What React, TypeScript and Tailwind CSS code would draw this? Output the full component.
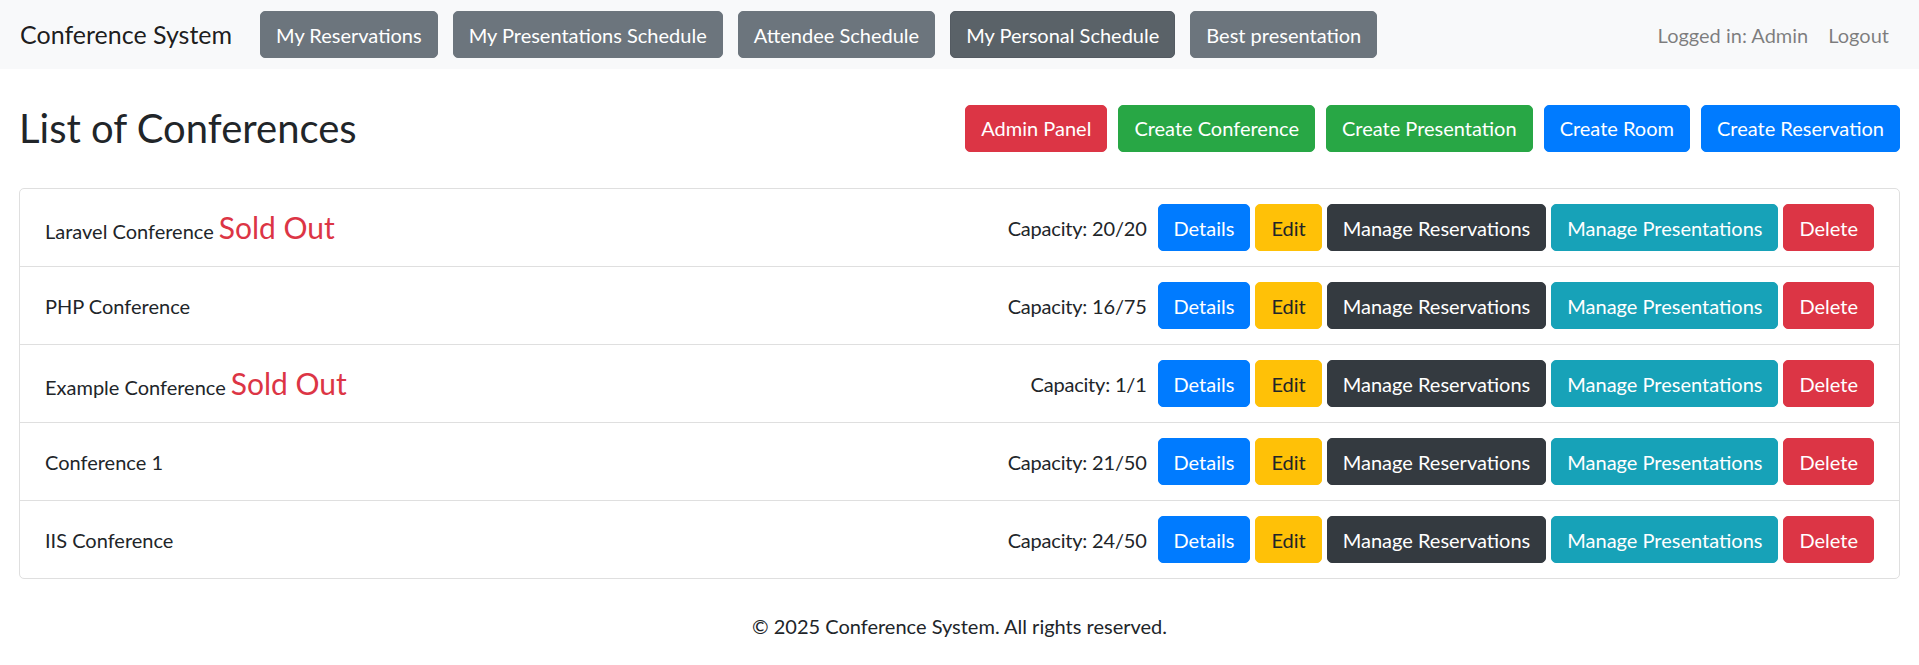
import React from "react";

const font = { fontFamily: "Lato, 'Liberation Sans', sans-serif" };

type Conf = { name: string; soldOut: boolean; capacity: string };

const conferences: Conf[] = [
  { name: "Laravel Conference", soldOut: true, capacity: "20/20" },
  { name: "PHP Conference", soldOut: false, capacity: "16/75" },
  { name: "Example Conference", soldOut: true, capacity: "1/1" },
  { name: "Conference 1", soldOut: false, capacity: "21/50" },
  { name: "IIS Conference", soldOut: false, capacity: "24/50" },
];

const btn =
  "inline-block px-[15px] py-[7.5px] text-[20px] leading-[30px] rounded-[5px] border whitespace-nowrap";

export default function App() {
  return (
    <div className="min-h-[665px] bg-white text-[#212529] font-['Lato','Liberation_Sans',sans-serif]" style={font}>
      <nav className="flex items-center h-[69px] px-5 bg-[#f8f9fa]">
        <span className="text-[25px] leading-[37px] mr-[28px] text-[#000000e6]">Conference System</span>
        <div className="flex items-center gap-[15px]">
          <a className={`${btn} bg-[#6c757d] border-[#6c757d] text-white`}>My Reservations</a>
          <a className={`${btn} bg-[#6c757d] border-[#6c757d] text-white`}>My Presentations Schedule</a>
          <a className={`${btn} bg-[#6c757d] border-[#6c757d] text-white`}>Attendee Schedule</a>
          <a className={`${btn} bg-[#5a6268] border-[#545b62] text-white`}>My Personal Schedule</a>
          <a className={`${btn} bg-[#6c757d] border-[#6c757d] text-white`}>Best presentation</a>
        </div>
        <div className="ml-auto flex items-center text-[20px] leading-[30px] text-[#00000080]">
          <span className="px-[10px]">Logged in: Admin</span>
          <a className="px-[10px]">Logout</a>
        </div>
      </nav>

      <main className="px-[19px]">
        <div className="flex items-center justify-between mt-[35px]">
          <h2 className="text-[40px] leading-[48px] font-normal">List of Conferences</h2>
          <div className="flex items-center gap-[11px]">
            <a className={`${btn} bg-[#dc3545] border-[#dc3545] text-white`}>Admin Panel</a>
            <a className={`${btn} bg-[#28a745] border-[#28a745] text-white`}>Create Conference</a>
            <a className={`${btn} bg-[#28a745] border-[#28a745] text-white`}>Create Presentation</a>
            <a className={`${btn} bg-[#007bff] border-[#007bff] text-white`}>Create Room</a>
            <a className={`${btn} bg-[#007bff] border-[#007bff] text-white`}>Create Reservation</a>
          </div>
        </div>

        <ul className="mt-[36px] border border-[#dfdfdf] rounded-[5px]">
          {conferences.map((c, i) => (
            <li
              key={c.name}
              className={`flex items-center justify-between px-[25px] py-[15px] ${i > 0 ? "border-t border-[#dfdfdf]" : ""}`}
            >
              <div className="text-[20px] leading-[30px]">
                {c.name}
                {c.soldOut && (
                  <span className="ml-[5px] text-[30px] leading-[36px] text-[#dc3545]">Sold Out</span>
                )}
              </div>
              <div className="flex items-center gap-[5px]">
                <span className="text-[20px] leading-[30px] mr-[6px] tracking-[-0.2px]">Capacity: {c.capacity}</span>
                <a className={`${btn} bg-[#007bff] border-[#007bff] text-white`}>Details</a>
                <a className={`${btn} bg-[#ffc107] border-[#ffc107] text-[#212529]`}>Edit</a>
                <a className={`${btn} bg-[#343a40] border-[#343a40] text-white`}>Manage Reservations</a>
                <a className={`${btn} bg-[#17a2b8] border-[#17a2b8] text-white`}>Manage Presentations</a>
                <a className={`${btn} bg-[#dc3545] border-[#dc3545] text-white`}>Delete</a>
              </div>
            </li>
          ))}
        </ul>

        <footer className="mt-[32px] text-center text-[20px] leading-[30px]">
          © 2025 Conference System. All rights reserved.
        </footer>
      </main>
    </div>
  );
}
